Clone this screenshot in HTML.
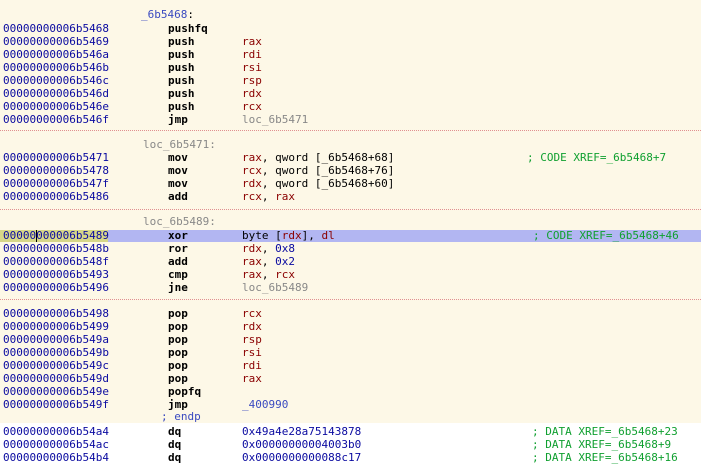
<!DOCTYPE html><html><head><style>
body{margin:0;width:701px;height:467px;background:#fff;overflow:hidden;position:relative;font-family:"DejaVu Sans Mono","Liberation Mono",monospace;font-size:11px}
.bg{position:absolute;left:0;top:0;width:701px;height:423px;background:#fdf8e7}
.r{position:absolute;left:0;width:701px;height:14px;line-height:14px;white-space:pre}
.r span{position:absolute;top:0}
.a{left:3px;color:#0a0aa0}
.m{left:168px;font-weight:bold;color:#000}
.o{left:242px;color:#000}
.g{color:#888}
.reg{color:#8a0000}
.n{color:#0a0aa0}
.lb{color:#888}
.c{color:#10a030}
.sep{position:absolute;left:0;width:701px;height:0;border-top:1px dotted #e09090}
.hl{position:absolute;left:0;top:230px;width:701px;height:12px;background:#b2b6f2}
.hla{position:absolute;left:0;top:230px;width:108px;height:12px;background:#d6d688}
</style></head><body>
<div class="bg"></div>
<div class="hl"></div><div class="hla"></div>
<div style="position:absolute;left:36px;top:230px;width:1px;height:12px;background:#000"></div>
<div class="r" style="top:8px"><span style="left:141px;color:#3a4ac0">_6b5468<span style="position:static;color:#000">:</span></span></div>
<div class="r" style="top:22px"><span class="a">00000000006b5468</span><span class="m">pushfq</span></div>
<div class="r" style="top:35px"><span class="a">00000000006b5469</span><span class="m">push</span><span class="o reg">rax</span></div>
<div class="r" style="top:48px"><span class="a">00000000006b546a</span><span class="m">push</span><span class="o reg">rdi</span></div>
<div class="r" style="top:61px"><span class="a">00000000006b546b</span><span class="m">push</span><span class="o reg">rsi</span></div>
<div class="r" style="top:74px"><span class="a">00000000006b546c</span><span class="m">push</span><span class="o reg">rsp</span></div>
<div class="r" style="top:87px"><span class="a">00000000006b546d</span><span class="m">push</span><span class="o reg">rdx</span></div>
<div class="r" style="top:100px"><span class="a">00000000006b546e</span><span class="m">push</span><span class="o reg">rcx</span></div>
<div class="r" style="top:113px"><span class="a">00000000006b546f</span><span class="m">jmp</span><span class="o g">loc_6b5471</span></div>
<div class="sep" style="top:130px"></div>
<div class="r" style="top:138px"><span style="left:143px" class="lb">loc_6b5471:</span></div>
<div class="r" style="top:151px"><span class="a">00000000006b5471</span><span class="m">mov</span><span class="o"><b style="font-weight:normal;color:#8a0000">rax</b>, qword [<b style="font-weight:normal;color:#000">_6b5468+68</b>]</span><span class="c" style="left:527px">; CODE XREF=_6b5468+7</span></div>
<div class="r" style="top:164px"><span class="a">00000000006b5478</span><span class="m">mov</span><span class="o"><b style="font-weight:normal;color:#8a0000">rcx</b>, qword [_6b5468+76]</span></div>
<div class="r" style="top:177px"><span class="a">00000000006b547f</span><span class="m">mov</span><span class="o"><b style="font-weight:normal;color:#8a0000">rdx</b>, qword [_6b5468+60]</span></div>
<div class="r" style="top:190px"><span class="a">00000000006b5486</span><span class="m">add</span><span class="o"><b style="font-weight:normal;color:#8a0000">rcx</b>, <b style="font-weight:normal;color:#8a0000">rax</b></span></div>
<div class="sep" style="top:209px"></div>
<div class="r" style="top:215px"><span style="left:143px" class="lb">loc_6b5489:</span></div>
<div class="r" style="top:229px"><span class="a">00000000006b5489</span><span class="m">xor</span><span class="o">byte [<b style="font-weight:normal;color:#8a0000">rdx</b>], <b style="font-weight:normal;color:#8a0000">dl</b></span><span class="c" style="left:533px">; CODE XREF=_6b5468+46</span></div>
<div class="r" style="top:242px"><span class="a">00000000006b548b</span><span class="m">ror</span><span class="o"><b style="font-weight:normal;color:#8a0000">rdx</b>, <b style="font-weight:normal;color:#0a0aa0">0x8</b></span></div>
<div class="r" style="top:255px"><span class="a">00000000006b548f</span><span class="m">add</span><span class="o"><b style="font-weight:normal;color:#8a0000">rax</b>, <b style="font-weight:normal;color:#0a0aa0">0x2</b></span></div>
<div class="r" style="top:268px"><span class="a">00000000006b5493</span><span class="m">cmp</span><span class="o"><b style="font-weight:normal;color:#8a0000">rax</b>, <b style="font-weight:normal;color:#8a0000">rcx</b></span></div>
<div class="r" style="top:281px"><span class="a">00000000006b5496</span><span class="m">jne</span><span class="o g">loc_6b5489</span></div>
<div class="sep" style="top:299px"></div>
<div class="r" style="top:307px"><span class="a">00000000006b5498</span><span class="m">pop</span><span class="o reg">rcx</span></div>
<div class="r" style="top:320px"><span class="a">00000000006b5499</span><span class="m">pop</span><span class="o reg">rdx</span></div>
<div class="r" style="top:333px"><span class="a">00000000006b549a</span><span class="m">pop</span><span class="o reg">rsp</span></div>
<div class="r" style="top:346px"><span class="a">00000000006b549b</span><span class="m">pop</span><span class="o reg">rsi</span></div>
<div class="r" style="top:359px"><span class="a">00000000006b549c</span><span class="m">pop</span><span class="o reg">rdi</span></div>
<div class="r" style="top:372px"><span class="a">00000000006b549d</span><span class="m">pop</span><span class="o reg">rax</span></div>
<div class="r" style="top:385px"><span class="a">00000000006b549e</span><span class="m">popfq</span></div>
<div class="r" style="top:398px"><span class="a">00000000006b549f</span><span class="m">jmp</span><span class="o" style="color:#3a4ac0">_400990</span></div>
<div class="r" style="top:410px"><span style="left:161px;color:#3a4ac0">; endp</span></div>
<div class="r" style="top:425px"><span class="a">00000000006b54a4</span><span class="m">dq</span><span class="o n">0x49a4e28a75143878</span><span class="c" style="left:532px">; DATA XREF=_6b5468+23</span></div>
<div class="r" style="top:438px"><span class="a">00000000006b54ac</span><span class="m">dq</span><span class="o n">0x00000000004003b0</span><span class="c" style="left:532px">; DATA XREF=_6b5468+9</span></div>
<div class="r" style="top:451px"><span class="a">00000000006b54b4</span><span class="m">dq</span><span class="o n">0x0000000000088c17</span><span class="c" style="left:532px">; DATA XREF=_6b5468+16</span></div>
</body></html>
